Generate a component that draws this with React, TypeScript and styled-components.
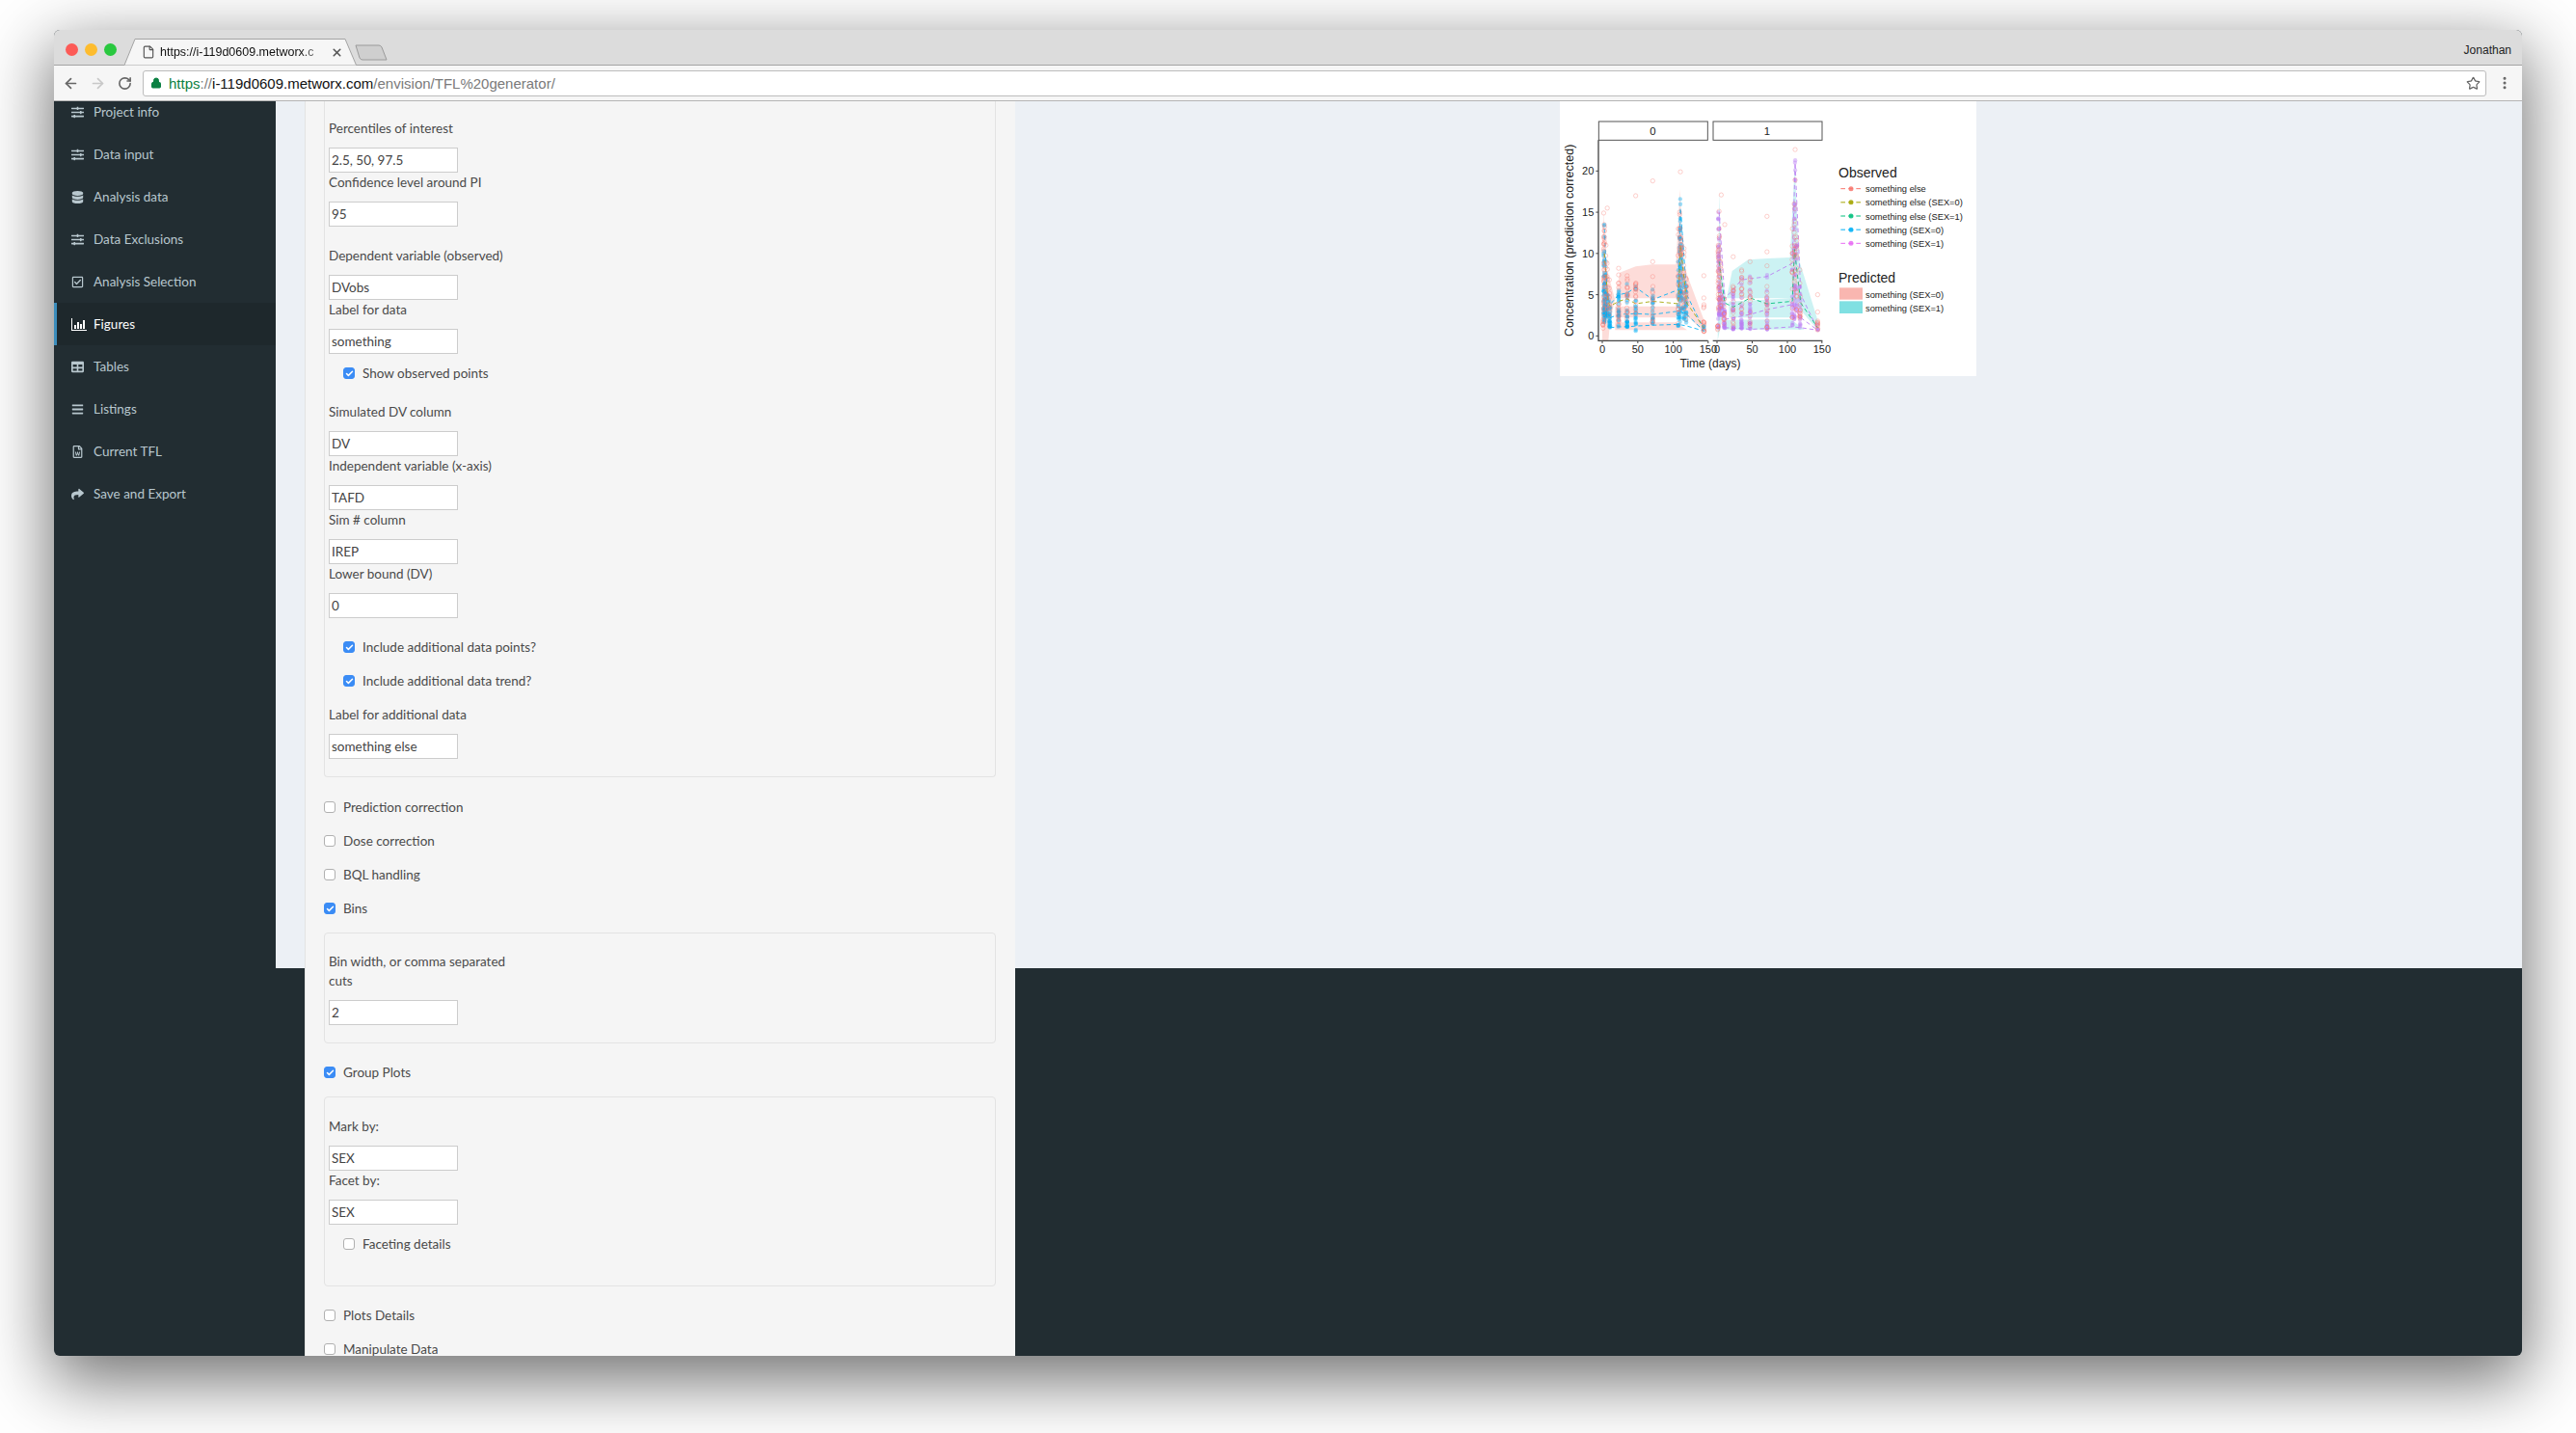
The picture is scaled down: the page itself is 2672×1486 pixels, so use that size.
import React from "react";
import styled, { createGlobalStyle } from "styled-components";
import {
  ArrowLeft,
  ArrowRight,
  Check,
  EllipsisVertical,
  File,
  Lock,
  RotateCw,
  Star,
  X,
} from "lucide-react";
import {
  FaBars,
  FaDatabase,
  FaRegCheckSquare,
  FaRegFileWord,
  FaShare,
  FaSlidersH,
  FaTable,
} from "react-icons/fa";

const FORM_FONT = `"Lato", "Open Sans", sans-serif`;
const CHROME_FONT = `"Liberation Sans", Arial, sans-serif`;

const GlobalStyle = createGlobalStyle`
  html, body {
    margin: 0;
    padding: 0;
    background: #fff;
  }
  * {
    box-sizing: border-box;
  }
`;

const Page = styled.div`
  width: 2672px;
  height: 1486px;
  padding: 31px 56px 80px;
  overflow: hidden;
  background: #fff;
`;

const Window = styled.div`
  width: 2560px;
  height: 1375px;
  display: flex;
  flex-direction: column;
  overflow: hidden;
  border-radius: 6px;
  background: #222d32;
  box-shadow: 0 22px 70px 4px rgba(0, 0, 0, 0.56);
`;

const TabBar = styled.div`
  height: 37px;
  flex: none;
  display: flex;
  align-items: flex-end;
  background: #dcdcdc;
  border-bottom: 1px solid #a3a3a3;
  font-family: ${CHROME_FONT};
`;

const Lights = styled.div`
  display: flex;
  gap: 7px;
  align-self: flex-start;
  margin: 14px 0 0 12px;
`;

const Light = styled.span<{ $color: string }>`
  width: 13px;
  height: 13px;
  border-radius: 50%;
  background: ${(p) => p.$color};
`;

const Tab = styled.div`
  position: relative;
  width: 241px;
  height: 28px;
  margin: 0 0 -1px 8px;
  display: flex;
  align-items: center;
  padding-left: 18px;
  font-size: 12.5px;
  color: #111;
`;

const TabShape = styled.svg`
  position: absolute;
  left: 0;
  top: 0;
`;

const TabIcon = styled(File)`
  position: relative;
  flex: none;
  color: #555;
`;

const TabTitle = styled.span`
  position: relative;
  width: 174px;
  margin-left: 5px;
  white-space: nowrap;
  -webkit-mask-image: linear-gradient(90deg, #000 84%, transparent 100%);
  mask-image: linear-gradient(90deg, #000 84%, transparent 100%);
`;

const TabClose = styled(X)`
  position: relative;
  flex: none;
  margin-left: 3px;
  color: #555;
`;

const NewTab = styled.svg`
  flex: none;
  margin: 0 0 3px -2px;
`;

const UserName = styled.span`
  margin: 0 11px auto auto;
  padding-top: 14px;
  font-size: 12px;
  color: #222;
`;

const Toolbar = styled.div`
  height: 37px;
  flex: none;
  display: flex;
  align-items: center;
  padding-left: 3px;
  background: #f6f6f6;
  border-bottom: 1px solid #b5b5b5;
  font-family: ${CHROME_FONT};
`;

const NavButton = styled.span<{ $dim?: boolean }>`
  width: 28px;
  height: 28px;
  display: flex;
  align-items: center;
  justify-content: center;
  color: ${(p) => (p.$dim ? "#c8c8c8" : "#666")};
`;

const Omnibox = styled.div`
  flex: 1;
  height: 27px;
  margin-left: 5px;
  display: flex;
  align-items: center;
  padding: 0 5px 0 7px;
  background: #fff;
  border: 1px solid #bcbcbc;
  border-radius: 3px;
`;

const LockIcon = styled(Lock)`
  flex: none;
  color: #0b8043;
  fill: #0b8043;
`;

const Url = styled.div`
  flex: 1;
  margin-left: 7px;
  padding-top: 1px;
  font-size: 15px;
  white-space: nowrap;
  color: #7a7a7a;
`;

const UrlScheme = styled.span`
  color: #0b8043;
`;

const UrlHost = styled.span`
  color: #111;
`;

const StarIcon = styled(Star)`
  flex: none;
  color: #666;
`;

const MenuDots = styled.span`
  width: 37px;
  display: flex;
  justify-content: center;
  color: #666;
`;

const Body = styled.div`
  flex: 1;
  min-height: 0;
  display: flex;
`;

const Sidebar = styled.nav`
  width: 230px;
  flex: none;
  margin-top: -11px;
  font-family: ${FORM_FONT};
  font-size: 13.5px;
`;

const MenuItem = styled.div<{ $active?: boolean }>`
  height: 44px;
  display: flex;
  align-items: center;
  padding-left: ${(p) => (p.$active ? 15 : 18)}px;
  border-left: ${(p) => (p.$active ? "3px solid #3c8dbc" : "0")};
  background: ${(p) => (p.$active ? "#1e282c" : "transparent")};
  color: ${(p) => (p.$active ? "#fff" : "#b8c7ce")};
`;

const MenuIcon = styled.span`
  width: 23px;
  flex: none;
  display: flex;
  align-items: center;
  font-size: 13px;
`;

const Main = styled.div`
  flex: 1;
  min-width: 0;
`;

const ContentPanel = styled.div`
  height: 899px;
  display: flex;
  align-items: flex-start;
  padding-left: 30px;
  background: #ecf0f5;
`;

const FormColumn = styled.div`
  width: 737px;
  height: 1301px;
  flex: none;
  padding: 0 20px 0 19px;
  background: #f5f5f5;
  border-left: 1px solid #e3e3e3;
  font-family: ${FORM_FONT};
  font-size: 13.5px;
  color: #4a4a4a;
`;

const Well = styled.div<{ $top?: number; $clipped?: boolean; $pb: number }>`
  margin-top: ${(p) => p.$top ?? 0}px;
  padding: ${(p) => (p.$clipped ? 18 : 19)}px 4px ${(p) => p.$pb}px;
  background: #f5f5f5;
  border: 1px solid #e3e3e3;
  border-top-width: ${(p) => (p.$clipped ? 0 : 1)}px;
  border-radius: ${(p) => (p.$clipped ? "0 0 4px 4px" : "4px")};
`;

const FieldGroup = styled.div<{ $top?: number; $narrow?: boolean }>`
  margin-top: ${(p) => p.$top ?? 0}px;
  max-width: ${(p) => (p.$narrow ? "200px" : "none")};
`;

const FieldLabel = styled.label`
  display: block;
  line-height: 20px;
  margin-bottom: 10px;
`;

const TextBox = styled.input`
  display: block;
  width: 134px;
  height: 26px;
  padding: 0 2px;
  background: #fff;
  border: 1px solid #ccc;
  border-radius: 0;
  outline: none;
  font: inherit;
  color: #444;
`;

const CheckRow = styled.label<{ $top?: number; $indent?: number }>`
  height: 20px;
  display: flex;
  align-items: center;
  gap: 8px;
  margin-top: ${(p) => p.$top ?? 15}px;
  margin-left: ${(p) => p.$indent ?? 0}px;
`;

const CheckBox = styled.span<{ $on?: boolean }>`
  width: 12px;
  height: 12px;
  flex: none;
  display: flex;
  align-items: center;
  justify-content: center;
  border-radius: 3px;
  border: 1px solid ${(p) => (p.$on ? "#3b8cf5" : "#b0b0b0")};
  background: ${(p) => (p.$on ? "#3b8cf5" : "#fff")};
  color: #fff;
`;

const PlotPane = styled.div`
  flex: 1;
  display: flex;
  justify-content: center;
  padding-right: 1px;
`;

const PlotCard = styled.div`
  width: 432px;
  height: 285px;
  background: #fff;
`;

type Props = { label: string; value: string; top?: number; narrow?: boolean };

function Field({ label, value, top, narrow }: Props) {
  return (
    <FieldGroup $top={top} $narrow={narrow}>
      <FieldLabel>{label}</FieldLabel>
      <TextBox type="text" defaultValue={value} />
    </FieldGroup>
  );
}

function Toggle({
  label,
  on,
  top,
  indent,
}: {
  label: string;
  on?: boolean;
  top?: number;
  indent?: number;
}) {
  return (
    <CheckRow $top={top} $indent={indent}>
      <CheckBox $on={on}>{on && <Check size={9} strokeWidth={4} />}</CheckBox>
      {label}
    </CheckRow>
  );
}

// fa4 bar-chart has upright bars, the fa package only has the horizontal one
function BarsIcon() {
  return (
    <svg width="16" height="13" viewBox="0 0 16 13" fill="currentColor">
      <path d="M0 0h1v12h15v1H0z" />
      <path d="M3 7h2v4H3zM6 4h2v7H6zM9 6h2v5H9zM12 2h2v9h-2z" />
    </svg>
  );
}

const menu = [
  { label: "Project info", icon: <FaSlidersH /> },
  { label: "Data input", icon: <FaSlidersH /> },
  { label: "Analysis data", icon: <FaDatabase /> },
  { label: "Data Exclusions", icon: <FaSlidersH /> },
  { label: "Analysis Selection", icon: <FaRegCheckSquare /> },
  { label: "Figures", icon: <BarsIcon />, active: true },
  { label: "Tables", icon: <FaTable /> },
  { label: "Listings", icon: <FaBars /> },
  { label: "Current TFL", icon: <FaRegFileWord /> },
  { label: "Save and Export", icon: <FaShare /> },
];

// ---- plot: coordinates are reference pixels times three
const RED = "#F8766D";
const OLIVE = "#A3A500";
const GREEN = "#00BF7D";
const BLUE = "#00B0F6";
const PURPLE = "#E76BF3";
const LAVENDER = "#B97CF2";

const yOf = (v: number) => 762 - 25.65 * v;
const x0 = (t: number) => 186 + 2.21 * t;
const x1 = (t: number) => 543 + 2.19 * t;

let seed = 42;
const rnd = () => {
  seed = (seed * 16807) % 2147483647;
  return seed / 2147483647;
};

type Col = [number, number, number, number];

// time, low, high, number of points
const colsObs0: Col[] = [
  [2, 2.5, 10, 20], [3, 1.5, 13.5, 26], [4, 2.5, 9, 20], [5, 2, 7, 16],
  [7, 2.2, 5, 14], [10, 1, 4.2, 14], [11, 1, 3.5, 10],
  [23, 1.1, 5.5, 24], [35, 1.1, 6.3, 24], [47, 0.6, 6, 20], [71, 1.2, 5.6, 18],
  [107, 1.2, 9, 20], [109, 1.5, 12, 20], [110, 3, 16.6, 28], [112, 3, 11, 16],
  [115, 2, 7, 16], [118, 1.6, 6, 16], [143, 0.5, 1.2, 4],
];
const colsObs1: Col[] = [
  [2, 1, 15, 22], [3, 2.5, 13, 22], [4, 3, 9, 16], [7, 2.5, 5, 14], [10, 1, 4, 14],
  [11, 0.9, 3, 10], [23, 0.8, 5.5, 22], [35, 0.9, 7, 22], [47, 0.8, 7.2, 20],
  [71, 0.8, 7.4, 20], [107, 1.3, 10, 16], [110, 2, 16, 26], [111, 6, 21.3, 16],
  [113, 3, 11, 14], [118, 1, 6, 16], [143, 0.6, 1.4, 4],
];
const colsRing0: Col[] = [
  [1, 0.6, 2, 8], [2, 2, 12, 18], [3, 3, 13.5, 16], [5, 4, 11, 10], [7, 3, 8.8, 10],
  [10, 2.5, 6.8, 10], [23, 1.2, 6.4, 16], [35, 1.2, 7.3, 18], [47, 2, 6.4, 16],
  [71, 1.5, 6, 14], [107, 1.5, 13, 14], [109, 4, 15, 14], [111, 5, 12, 16],
  [115, 3, 10.6, 14], [118, 2, 7, 12], [143, 0.5, 1.7, 10], [143, 3.4, 4.6, 4],
];
const colsRing1: Col[] = [
  [1, 0.7, 1.2, 6], [2, 3, 11, 18], [3, 4, 13, 16], [5, 3, 9, 10], [10, 1.5, 4.5, 10],
  [23, 1, 6, 14], [35, 1.2, 8, 16], [47, 1.2, 7, 14], [71, 1, 6, 14],
  [107, 2, 13, 14], [110, 5, 16, 16], [113, 3, 12, 14], [118, 2, 8, 12],
  [143, 0.6, 1.8, 9],
];

const spread = (cols: Col[], skew: number) =>
  cols.flatMap(([t, lo, hi, n]) =>
    Array.from({ length: n }, (_, i) => ({
      t: t + (rnd() - 0.5) * 0.8,
      v: i === 0 ? hi : lo + (hi - lo) * Math.pow(rnd(), skew),
    }))
  );

const obs0 = spread(colsObs0, 1.5);
const obs1 = spread(colsObs1, 1.5);
const ring0 = [
  ...spread(colsRing0, 1.2),
  { t: 2, v: 14.9 }, { t: 7, v: 15.5 }, { t: 47, v: 17 }, { t: 71, v: 18.8 },
  { t: 110, v: 19.9 }, { t: 143, v: 7.3 }, { t: 71, v: 9 }, { t: 71, v: 7.2 },
  { t: 23, v: 8.2 }, { t: 23, v: 7.4 },
];
const ring1 = [
  ...spread(colsRing1, 1.2),
  { t: 6, v: 17.1 }, { t: 11, v: 13.5 }, { t: 3, v: 15.1 }, { t: 71, v: 14.5 },
  { t: 111, v: 22.6 }, { t: 111, v: 18.9 }, { t: 71, v: 10.2 }, { t: 71, v: 8.5 },
  { t: 23, v: 9.6 }, { t: 47, v: 9 }, { t: 143, v: 5 }, { t: 143, v: 2.9 },
];

const line = (pts: number[][], x: (t: number) => number) =>
  pts.map(([t, v]) => `${x(t).toFixed(1)},${yOf(v).toFixed(1)}`).join(" ");

const trends0: [string, number[][]][] = [
  [BLUE, [[3, 13], [7, 5], [11, 3.8], [23, 5], [35, 5.2], [47, 5.9], [71, 4.4], [107, 5.6], [110, 15.5], [119, 5], [143, 0.8]]],
  [BLUE, [[11, 2.2], [23, 2.6], [47, 2.7], [71, 2.6], [107, 3], [119, 2.6], [143, 0.6]]],
  [BLUE, [[11, 1], [23, 1.1], [35, 1.1], [47, 1.2], [71, 1.3], [107, 1.4], [119, 1.2], [143, 0.6]]],
  [OLIVE, [[3, 10], [8, 4.2], [11, 3.6], [23, 4.2], [35, 4.5], [47, 3.9], [71, 4.2], [107, 3.9], [110, 11], [119, 4], [143, 1]]],
];
const trends1: [string, number[][]][] = [
  [LAVENDER, [[3, 15], [11, 4.5], [35, 6.8], [71, 7.2], [107, 8.8], [111, 21], [119, 5], [143, 0.8]]],
  [LAVENDER, [[11, 2], [47, 2.6], [71, 3.2], [107, 3.8], [119, 2.2], [143, 0.7]]],
  [LAVENDER, [[11, 1], [35, 0.9], [47, 0.8], [71, 0.9], [107, 1.1], [119, 1], [143, 0.7]]],
  [GREEN, [[3, 9], [11, 4], [23, 3.5], [47, 4.6], [71, 3.9], [107, 4.2], [110, 10.5], [119, 4], [143, 1]]],
];

const bands0 = [
  "M186 777 L186 540 L190 372 L196 540 L226 650 L240 565 L290 546 L340 540 L415 540 L428 305 L438 540 L505 720 L505 752 L440 690 L415 645 L226 645 L210 720 L205 777 Z",
  "M226 670 L415 670 L415 705 L226 705 Z",
  "M226 720 L415 720 L450 744 L226 744 Z",
];
const bands1 = [
  "M545 777 L550 312 L556 560 L572 650 L590 560 L640 525 L700 521 L770 518 L785 230 L798 525 L860 725 L858 745 L810 690 L772 645 L572 645 Z",
  "M580 655 L772 645 L772 705 L580 705 Z",
  "M565 712 L772 710 L815 742 L565 742 Z",
];

const legendObs: [string, string][] = [
  [RED, "something else"],
  [OLIVE, "something else (SEX=0)"],
  [GREEN, "something else (SEX=1)"],
  [BLUE, "something (SEX=0)"],
  [PURPLE, "something (SEX=1)"],
];

function ConcentrationPlot() {
  const tick0 = [0, 50, 100, 150];
  return (
    <svg
      width="432"
      height="285"
      viewBox="54 32 1296 855"
      fontFamily={CHROME_FONT}
      fill="#222"
    >
      {bands0.map((d) => (
        <path key={d} d={d} fill={RED} fillOpacity={0.26} />
      ))}
      {bands1.map((d) => (
        <path key={d} d={d} fill="#00BFC4" fillOpacity={0.2} />
      ))}

      {obs0.map((p, i) => (
        <circle key={i} cx={x0(p.t)} cy={yOf(p.v)} r={6.5} fill={BLUE} fillOpacity={0.4} />
      ))}
      {obs1.map((p, i) => (
        <circle key={i} cx={x1(p.t)} cy={yOf(p.v)} r={6.5} fill={LAVENDER} fillOpacity={0.42} />
      ))}
      {trends0.map(([c, pts], i) => (
        <polyline key={i} points={line(pts, x0)} fill="none" stroke={c} strokeWidth={2.6} strokeDasharray="13 9" />
      ))}
      {trends1.map(([c, pts], i) => (
        <polyline key={i} points={line(pts, x1)} fill="none" stroke={c} strokeWidth={2.6} strokeDasharray="13 9" />
      ))}
      {ring0.map((p, i) => (
        <circle key={i} cx={x0(p.t)} cy={yOf(p.v)} r={6.5} fill="none" stroke={RED} strokeOpacity={0.42} strokeWidth={2.4} />
      ))}
      {ring1.map((p, i) => (
        <circle key={i} cx={x1(p.t)} cy={yOf(p.v)} r={6.5} fill="none" stroke={RED} strokeOpacity={0.42} strokeWidth={2.4} />
      ))}

      <rect x={175} y={95} width={339} height={58} fill="#fff" stroke="#555" strokeWidth={3} />
      <rect x={531} y={95} width={339} height={58} fill="#fff" stroke="#555" strokeWidth={3} />
      <text x={343} y={137} fontSize={34} textAnchor="middle">0</text>
      <text x={699} y={137} fontSize={34} textAnchor="middle">1</text>

      <path d="M174 153V777H515M530 777H871" fill="none" stroke="#444" strokeWidth={4} />
      {[0, 5, 10, 15, 20].map((v) => (
        <g key={v}>
          <path d={`M166 ${yOf(v)}H174`} stroke="#444" strokeWidth={3} />
          <text x={160} y={yOf(v) + 12} fontSize={33} textAnchor="end">{v}</text>
        </g>
      ))}
      {tick0.map((t) => (
        <g key={t}>
          <path d={`M${x0(t) - (t === 150 ? 2 : 0)} 777v8`} stroke="#444" strokeWidth={3} />
          <text x={x0(t) - (t === 150 ? 2 : 0)} y={816} fontSize={33} textAnchor="middle">{t}</text>
          <path d={`M${x1(t) - (t === 150 ? 2 : 0)} 777v8`} stroke="#444" strokeWidth={3} />
          <text x={x1(t) - (t === 150 ? 2 : 0)} y={816} fontSize={33} textAnchor="middle">{t}</text>
        </g>
      ))}
      <text x={522} y={860} fontSize={36} textAnchor="middle">Time (days)</text>
      <text transform="translate(96 465) rotate(-90)" fontSize={37.5} textAnchor="middle">
        Concentration (prediction corrected)
      </text>

      <text x={921} y={270} fontSize={42}>Observed</text>
      {legendObs.map(([c, label], i) => {
        const y = 304 + i * 42.5;
        return (
          <g key={label}>
            <path d={`M928 ${y}H992`} stroke={c} strokeWidth={3} strokeDasharray="14 10" />
            <circle cx={960} cy={y} r={7.5} fill={c} fillOpacity={0.85} />
            <text x={1005} y={y + 11} fontSize={28}>{label}</text>
          </g>
        );
      })}
      <text x={921} y={597} fontSize={42}>Predicted</text>
      <rect x={924} y={612} width={72} height={37} fill="#F9B6B0" />
      <rect x={924} y={654} width={72} height={38} fill="#80E0E2" />
      <text x={1005} y={643} fontSize={28}>something (SEX=0)</text>
      <text x={1005} y={685} fontSize={28}>something (SEX=1)</text>
    </svg>
  );
}

function App() {
  return (
    <Page>
      <GlobalStyle />
      <Window>
        <TabBar>
          <Lights>
            <Light $color="#fc5b57" />
            <Light $color="#fdbc2e" />
            <Light $color="#29c83f" />
          </Lights>
          <Tab>
            <TabShape width="241" height="28" viewBox="0 0 241 28">
              <path d="M0 27.5 L11 0.5 H229 L240.5 27.5" fill="#f6f6f6" stroke="#a3a3a3" />
            </TabShape>
            <TabIcon size={14} />
            <TabTitle>https://i-119d0609.metworx.c</TabTitle>
            <TabClose size={13} strokeWidth={3} />
          </Tab>
          <NewTab width="34" height="18" viewBox="0 0 34 18">
            <path d="M1 1H25Q27 1 28 3L33 16H8Q6 16 5 14Z" fill="#cfcfcf" stroke="#9a9a9a" />
          </NewTab>
          <UserName>Jonathan</UserName>
        </TabBar>
        <Toolbar>
          <NavButton>
            <ArrowLeft size={17} strokeWidth={2.4} />
          </NavButton>
          <NavButton $dim>
            <ArrowRight size={17} strokeWidth={2.4} />
          </NavButton>
          <NavButton>
            <RotateCw size={15} strokeWidth={2.6} />
          </NavButton>
          <Omnibox>
            <LockIcon size={12} />
            <Url>
              <UrlScheme>https</UrlScheme>://
              <UrlHost>i-119d0609.metworx.com</UrlHost>
              /envision/TFL%20generator/
            </Url>
            <StarIcon size={15} strokeWidth={2} />
          </Omnibox>
          <MenuDots>
            <EllipsisVertical size={16} strokeWidth={2.6} />
          </MenuDots>
        </Toolbar>
        <Body>
          <Sidebar>
            {menu.map((m) => (
              <MenuItem key={m.label} $active={m.active}>
                <MenuIcon>{m.icon}</MenuIcon>
                {m.label}
              </MenuItem>
            ))}
          </Sidebar>
          <Main>
            <ContentPanel>
              <FormColumn>
                <Well $clipped $pb={18}>
                  <Field label="Percentiles of interest" value="2.5, 50, 97.5" />
                  <Field label="Confidence level around PI" value="95" />
                  <Field label="Dependent variable (observed)" value="DVobs" top={20} />
                  <Field label="Label for data" value="something" />
                  <Toggle label="Show observed points" on top={10} indent={15} />
                  <Field label="Simulated DV column" value="DV" top={20} />
                  <Field label="Independent variable (x-axis)" value="TAFD" />
                  <Field label="Sim # column" value="IREP" />
                  <Field label="Lower bound (DV)" value="0" />
                  <Toggle label="Include additional data points?" on top={20} indent={15} />
                  <Toggle label="Include additional data trend?" on indent={15} />
                  <Field label="Label for additional data" value="something else" top={15} />
                </Well>
                <Toggle label="Prediction correction" top={21} />
                <Toggle label="Dose correction" />
                <Toggle label="BQL handling" />
                <Toggle label="Bins" on />
                <Well $top={15} $pb={18}>
                  <Field label="Bin width, or comma separated cuts" value="2" narrow />
                </Well>
                <Toggle label="Group Plots" on top={20} />
                <Well $top={15} $pb={33}>
                  <Field label="Mark by:" value="SEX" top={1} />
                  <Field label="Facet by:" value="SEX" />
                  <Toggle label="Faceting details" top={10} indent={15} />
                </Well>
                <Toggle label="Plots Details" top={20} />
                <Toggle label="Manipulate Data" />
              </FormColumn>
              <PlotPane>
                <PlotCard>
                  <ConcentrationPlot />
                </PlotCard>
              </PlotPane>
            </ContentPanel>
          </Main>
        </Body>
      </Window>
    </Page>
  );
}

export default App;
